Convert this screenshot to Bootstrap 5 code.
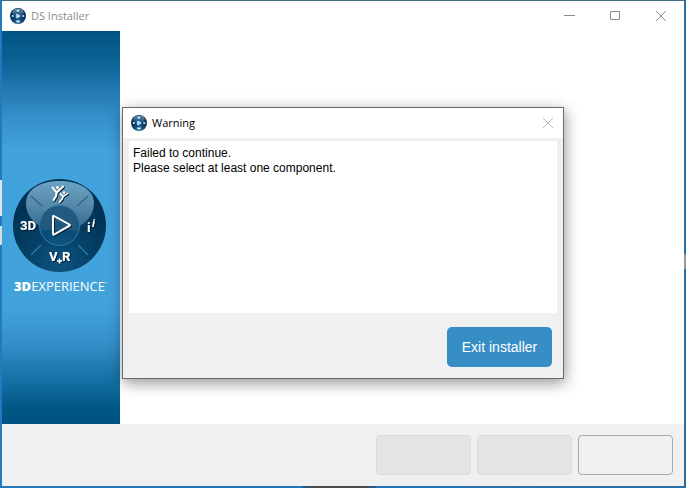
<!DOCTYPE html>
<html lang="en">
<head>
<meta charset="utf-8">
<meta name="viewport" content="width=device-width, initial-scale=1">
<title>DS Installer</title>
<link href="https://cdn.jsdelivr.net/npm/bootstrap@5.3.0/dist/css/bootstrap.min.css" rel="stylesheet">
<style>
  body {
    font-family: "Liberation Sans", Arial, sans-serif;
    font-size: 12px;
    line-height: 15px;
    color: #000;
    /* desktop strip seen around the window, with edges of other windows */
    background:
      linear-gradient(#e3e6e9, #e3e6e9) 0 180px / 2px 36px no-repeat,
      linear-gradient(#d5dde4, #d5dde4) 0 226px / 2px 19px no-repeat,
      linear-gradient(#999, #999) 100% 254px / 2px 15px no-repeat,
      linear-gradient(90deg, #1f5f98, #4a4a4c 12px, #4a4a4c 62px, #1f5f98) 302px 100% / 74px 2px no-repeat,
      linear-gradient(#3f7186, #3f7186) 0 0 / 100% 1px no-repeat,
      linear-gradient(90deg, #2478be, #276fa6);
  }
  .desktop { padding: 1px 2px 2px; }
  .title-bar { height: 30px; padding-left: 8px; font-family: "Open Sans", "Noto Sans", sans-serif; font-size: 11px; line-height: 16px; }
  .app-title { color: #8b8b8b; }
  .title-gap { gap: 5px; }
  .caption-btn { width: 46px; height: 30px; color: #8a8a8a; }
  .caption-btn-sm { width: 30px; color: #bcbcbc; }
  .side-panel {
    width: 118px;
    padding-top: 147px;
    background: linear-gradient(#005483 0, #0d6296 8%, #2278b0 15%, #3690ca 22%, #42a3dc 31%, #42a3dc 70%, #3690ca 79%, #1c76ad 87%, #005885 96%, #005283 100%);
  }
  .bottom-bar { background: #f0f0f0; padding: 11px; gap: 6px; }
  .step-btn { width: 95px; height: 40px; border-radius: 4px; border: 1px solid #a9a9a9; background: #f0f0f0; }
  .step-btn:disabled { background: #e3e5e4; border-color: #dadcdc; }
  .warning-layer { padding-bottom: 2px; }
  .warning-box { width: 442px; border: 1px solid #6b6b6b; background: #f0f0f0; box-shadow: 1px 4px 14px rgba(0,0,0,.42); }
  .message-area { min-height: 172px; margin: 3px 6px 0; padding: 5px 4px; }
  .action-row { padding: 14px 11px 11px; }
  .exit-btn { width: 105px; height: 40px; border-radius: 5px; background: #368ec4; color: #fff; font-size: 14px; line-height: 20px; }
  .exit-btn:hover { background: #2f80b3; color: #fff; }
</style>
</head>
<body>
<svg width="0" height="0" class="position-absolute" aria-hidden="true">
  <defs>
    <radialGradient id="ball" cx=".5" cy=".9" r=".8">
      <stop offset="0" stop-color="#2c7cae"/><stop offset=".45" stop-color="#0b3c68"/><stop offset="1" stop-color="#072746"/>
    </radialGradient>
    <linearGradient id="ballGloss" x1="0" y1="0" x2="0" y2="1">
      <stop offset="0" stop-color="#5f8dab"/><stop offset="1" stop-color="#1a4c75"/>
    </linearGradient>
    <symbol id="appIcon" viewBox="0 0 16 16">
      <circle cx="8" cy="8" r="8" fill="url(#ball)"/>
      <ellipse cx="8" cy="4.200" rx="5.800" ry="3.800" fill="url(#ballGloss)"/>
      <circle cx="8" cy="8" r="3" fill="#1c66a0"/>
      <path d="M6.800 6.200v3.600L9.900 8z" fill="#7fbde6" stroke="#fff" stroke-width=".9"/>
      <path d="M6.800 2.600h2.200M1.800 8h2M12.200 8h2M6.400 13.400h3.200" stroke="#eef8ff" stroke-width="1.600"/>
    </symbol>
  </defs>
</svg>

<div class="desktop vh-100 d-flex flex-column position-relative">
  <header class="title-bar bg-white d-flex align-items-center justify-content-between">
    <div class="d-flex align-items-center title-gap app-title">
      <svg width="16" height="16" aria-hidden="true"><use href="#appIcon"/></svg>
      <span>DS Installer</span>
    </div>
    <div class="d-flex">
      <button type="button" class="caption-btn btn p-0 border-0 rounded-0 d-flex align-items-center justify-content-center" aria-label="Minimize">
        <svg width="11" height="11" stroke="currentColor" fill="none"><path d="M0 4.500h11"/></svg>
      </button>
      <button type="button" class="caption-btn btn p-0 border-0 rounded-0 d-flex align-items-center justify-content-center" aria-label="Maximize">
        <svg width="11" height="11" stroke="currentColor" fill="none"><path d="M.5.5h9v8h-9z"/></svg>
      </button>
      <button type="button" class="caption-btn btn p-0 border-0 rounded-0 d-flex align-items-center justify-content-center" aria-label="Close">
        <svg width="11" height="11" stroke="currentColor" fill="none"><path d="M0 0l10 10M10 0L0 10"/></svg>
      </button>
    </div>
  </header>

  <main class="d-flex flex-grow-1 bg-white">
    <aside class="side-panel">
      <svg class="d-block" width="118" height="118" viewBox="0 0 118 118" role="img" aria-label="3DEXPERIENCE">
        <defs>
          <radialGradient id="disc" cx=".5" cy=".92" r=".7">
            <stop offset="0" stop-color="#0c5481"/><stop offset=".55" stop-color="#053f64"/><stop offset="1" stop-color="#013253"/>
          </radialGradient>
          <linearGradient id="gloss" x1="0" y1="0" x2="0" y2="1">
            <stop offset="0" stop-color="#6ba3c4"/><stop offset=".5" stop-color="#5588a8"/><stop offset="1" stop-color="#2f688d"/>
          </linearGradient>
          <linearGradient id="hub" x1="0" y1="0" x2="0" y2="1">
            <stop offset="0" stop-color="#245a80"/><stop offset=".6" stop-color="#1f5980"/><stop offset=".65" stop-color="#0a4a75"/><stop offset="1" stop-color="#0d5482"/>
          </linearGradient>
          <filter id="shade" x="-20%" y="-20%" width="150%" height="150%"><feDropShadow dx="1" dy="1" stdDeviation=".6" flood-color="#011c30"/></filter>
        </defs>
        <circle cx="57.500" cy="47.500" r="46.500" fill="url(#disc)"/>
        <path d="M24 25C24 11 39 3 57.500 3S92 11 92 25C92 41 77 53 57.500 53S24 41 24 25z" fill="url(#gloss)"/>
        <circle cx="57.500" cy="47.500" r="20" fill="url(#hub)" stroke="#2e79a5"/>
        <path d="M29 18l11 10M86 18l-11 10" stroke="#2b6489" stroke-width="1.200" fill="none"/>
        <path d="M29 77l10-10M86 77l-10-10" stroke="#2c7dab" stroke-width="1.200" fill="none"/>
        <g filter="url(#shade)">
          <path d="M51 38.500Q51 37.500 52 38L67.500 46.500Q68.500 47 67.500 47.600L52 56.500Q51 57 51 56z" fill="none" stroke="#fff" stroke-width="1.900"/>
          <g fill="none" stroke="#fff" stroke-linecap="round" stroke-linejoin="round">
            <path d="M50.500 9.500l4 5 6.500-6M54.500 14.500l-.5 3.500-2.500 4" stroke-width="1.900"/>
            <path d="M58.500 15.500l2.500 3 4.500-3M61 18.500l-.8 2.200-2.700 3.300" stroke-width="1.500"/>
          </g>
          <circle cx="55.500" cy="9.500" r="1.400" fill="#fff"/><circle cx="62" cy="14.500" r="1.200" fill="#fff"/>
          <g fill="#fff" font-family="Roboto, 'Liberation Sans', sans-serif" font-weight="700" font-size="13">
            <text x="18" y="52">3D</text>
            <text x="47" y="83">V</text>
            <text x="60" y="83">R</text>
            <text x="85" y="54">i</text>
            <text x="90" y="49" font-size="11" font-style="italic">i</text>
          </g>
          <path d="M57.500 80.500v5M55 83h5" stroke="#fff" stroke-width="1.300"/>
        </g>
        <text x="12" y="113" fill="#fff" font-family="'Open Sans', sans-serif" font-size="13"><tspan font-weight="800">3D</tspan>EXPERIENCE<tspan font-size="8" dy="-4">'</tspan></text>
      </svg>
    </aside>
  </main>

  <footer class="bottom-bar d-flex justify-content-end">
    <button type="button" class="step-btn" aria-label="Back" disabled></button>
    <button type="button" class="step-btn" aria-label="Next" disabled></button>
    <button type="button" class="step-btn" aria-label="Cancel"></button>
  </footer>

  <div class="warning-layer position-absolute top-0 start-0 w-100 h-100 d-flex align-items-center justify-content-center">
    <section class="warning-box" role="alertdialog" aria-labelledby="warnTitle" aria-describedby="warnText">
      <header class="title-bar bg-white d-flex align-items-center justify-content-between">
        <div class="d-flex align-items-center title-gap">
          <svg width="16" height="16" aria-hidden="true"><use href="#appIcon"/></svg>
          <span id="warnTitle">Warning</span>
        </div>
        <button type="button" class="caption-btn caption-btn-sm btn p-0 border-0 rounded-0 d-flex align-items-center justify-content-center" aria-label="Close warning">
          <svg width="11" height="11" stroke="currentColor" fill="none"><path d="M0 0l10 10M10 0L0 10"/></svg>
        </button>
      </header>
      <div id="warnText" class="message-area bg-white">Failed to continue.<br>Please select at least one component.</div>
      <div class="action-row d-flex justify-content-end">
        <button type="button" class="exit-btn btn border-0 p-0">Exit installer</button>
      </div>
    </section>
  </div>
</div>
<script src="https://cdn.jsdelivr.net/npm/bootstrap@5.3.0/dist/js/bootstrap.bundle.min.js"></script>
</body>
</html>
